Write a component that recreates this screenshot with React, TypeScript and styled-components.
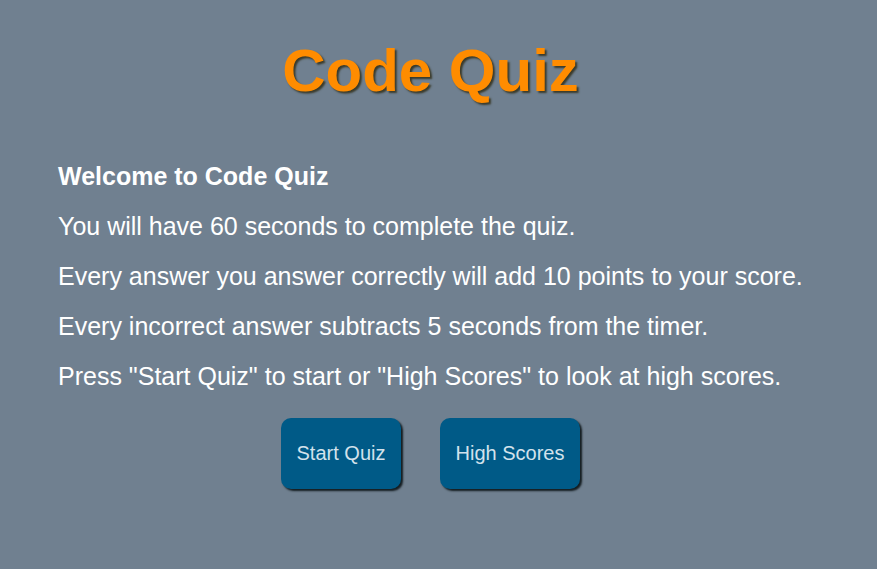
import React from "react";
import styled, { createGlobalStyle } from "styled-components";

const Global = createGlobalStyle`
  html, body { margin: 0; padding: 0; }
  body {
    background: #708090;
    font-family: "Liberation Sans", Arial, sans-serif;
    min-height: 569px;
  }
`;

const Page = styled.main`
  padding: 40px 16px 0 0;
`;

const Title = styled.h1`
  margin: 0;
  text-align: center;
  font-size: 60px;
  font-weight: 700;
  color: #ff8c00;
  text-shadow: 2px 2px 2px #3a3a2a;
  line-height: 62px;
`;

const Intro = styled.section`
  margin-top: 60px;
  padding-left: 58px;
  color: #ffffff;
`;

const Heading = styled.p`
  margin: 0 0 22px 0;
  font-size: 25px;
  font-weight: 700;
  line-height: 28px;
`;

const Line = styled.p`
  margin: 0 0 22px 0;
  font-size: 25px;
  line-height: 28px;
`;

const Buttons = styled.div`
  display: flex;
  justify-content: center;
  gap: 39px;
  margin-top: 28px;
`;

const Btn = styled.button<{ $w: number }>`
  width: ${(p) => p.$w}px;
  height: 71px;
  background: #005a87;
  color: #d3e2ec;
  border: none;
  border-radius: 10px;
  box-shadow: 2px 2px 2px #141c20;
  font-family: "Liberation Sans", Arial, sans-serif;
  font-size: 20px;
  cursor: pointer;
`;

export default function App() {
  return (
    <>
      <Global />
      <Page>
        <Title>Code Quiz</Title>
        <Intro>
          <Heading>Welcome to Code Quiz</Heading>
          <Line>You will have 60 seconds to complete the quiz.</Line>
          <Line>Every answer you answer correctly will add 10 points to your score.</Line>
          <Line>Every incorrect answer subtracts 5 seconds from the timer.</Line>
          <Line>Press "Start Quiz" to start or "High Scores" to look at high scores.</Line>
        </Intro>
        <Buttons>
          <Btn $w={120}>Start Quiz</Btn>
          <Btn $w={140}>High Scores</Btn>
        </Buttons>
      </Page>
    </>
  );
}
